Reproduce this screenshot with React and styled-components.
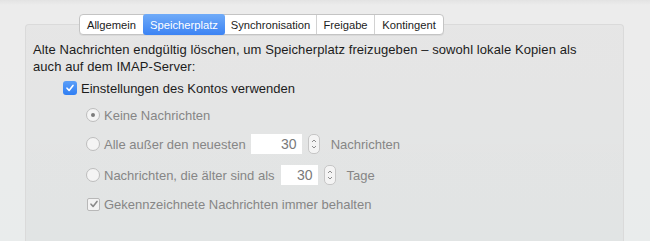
import React from "react";
import styled, { createGlobalStyle } from "styled-components";

const Global = createGlobalStyle`
  html, body { margin: 0; padding: 0; }
  body {
    width: 650px;
    height: 241px;
    overflow: hidden;
    font-family: "Liberation Sans", Arial, sans-serif;
    font-size: 13px;
    background: linear-gradient(#e3e3e3 0px, #ececec 5px, #ececec 60px, #e9ecec 241px);
  }
`;

const Window = styled.div`
  width: 650px;
  height: 241px;
  padding-top: 14px;
  box-sizing: border-box;
  display: flex;
  flex-direction: column;
`;

const TabBar = styled.div`
  display: flex;
  align-self: flex-start;
  margin-left: 79px;
  height: 19px;
  border: 1px solid #c4c4c4;
  border-radius: 4px;
  background: #ffffff;
  box-shadow: 0 1px 0 rgba(0, 0, 0, 0.05);
  position: relative;
  z-index: 1;
`;

const Tab = styled.div`
  display: flex;
  align-items: center;
  justify-content: center;
  width: ${(p) => p.$w}px;
  box-sizing: border-box;
  font-size: 11.2px;
  color: ${(p) => (p.$active ? "#ffffff" : "#1c1c1c")};
  background: ${(p) =>
    p.$active ? "linear-gradient(#70abf8, #3b83f4)" : "transparent"};
  border-left: ${(p) => (p.$first || p.$active || p.$afterActive ? "none" : "1px solid #d2d2d2")};
  margin: ${(p) => (p.$active ? "-1px 0" : "0")};
  height: ${(p) => (p.$active ? "21px" : "100%")};
  border-radius: ${(p) => (p.$active ? "3px" : "0")};
  white-space: nowrap;
`;

const Panel = styled.div`
  margin-top: -11px;
  margin-left: 25px;
  width: 599px;
  flex: 1;
  box-sizing: border-box;
  border: 1px solid #dadada;
  border-bottom: none;
  border-radius: 4px 4px 0 0;
  background: linear-gradient(rgba(0, 0, 0, 0.028), rgba(0, 0, 0, 0.035));
  padding: 16px 0 0 7px;
  display: flex;
  flex-direction: column;
`;

const Intro = styled.p`
  margin: 0;
  color: #1c1c1c;
  line-height: 17px;
  width: 556px;
  letter-spacing: 0.08px;
`;

const Row = styled.div`
  display: flex;
  align-items: center;
  height: 20px;
  margin-top: ${(p) => p.$gap}px;
  margin-left: ${(p) => p.$indent}px;
  color: ${(p) => (p.$disabled ? "#868686" : "#1c1c1c")};
  white-space: nowrap;
`;

const BlueCheck = styled.span`
  width: 14px;
  height: 14px;
  border-radius: 3px;
  background: linear-gradient(#5c9ff8, #2f7ef3);
  display: inline-flex;
  align-items: center;
  justify-content: center;
  margin-right: 4px;
  flex: none;
`;

const GrayCheck = styled.span`
  width: 11px;
  height: 11px;
  border-radius: 2px;
  border: 1px solid #b8b8b8;
  background: #f3f3f3;
  display: inline-flex;
  align-items: center;
  justify-content: center;
  margin-right: 4px;
  flex: none;
`;

const Radio = styled.span`
  width: 12px;
  height: 12px;
  border-radius: 50%;
  border: 1px solid #bdbdbd;
  background: #f4f4f4;
  display: inline-flex;
  align-items: center;
  justify-content: center;
  margin-right: 4px;
  flex: none;
  &::after {
    content: "";
    display: ${(p) => (p.$on ? "block" : "none")};
    width: 4px;
    height: 4px;
    border-radius: 50%;
    background: #7c7c7c;
  }
`;

const NumField = styled.span`
  width: ${(p) => p.$w}px;
  height: 20px;
  background: #ffffff;
  color: #7a7a7a;
  display: inline-flex;
  align-items: center;
  justify-content: flex-end;
  padding-right: 5px;
  box-sizing: border-box;
  margin-left: ${(p) => p.$ml}px;
  font-size: 14px;
`;

const Stepper = styled.span`
  width: 10px;
  height: 18px;
  border: 1px solid #c6c6c6;
  border-radius: 5px;
  background: #f4f4f4;
  margin-left: 6px;
  margin-right: 11px;
  display: inline-flex;
  align-items: center;
  justify-content: center;
  flex: none;
`;

const Options = styled.div`
  display: flex;
  flex-direction: column;
`;

const Check = ({ color }) => (
  <svg width="10" height="10" viewBox="0 0 10 10">
    <path d="M2 5.2 L4.1 7.4 L8 2.4" fill="none" stroke={color} strokeWidth="1.6" strokeLinecap="round" strokeLinejoin="round" />
  </svg>
);

const Arrows = () => (
  <svg width="6" height="14" viewBox="0 0 6 14">
    <path d="M1 5 L3 3 L5 5 M1 9 L3 11 L5 9" fill="none" stroke="#8c8c8c" strokeWidth="1" />
  </svg>
);

const tabs = [
  { label: "Allgemein", w: 63 },
  { label: "Speicherplatz", w: 82, active: true },
  { label: "Synchronisation", w: 91 },
  { label: "Freigabe", w: 58 },
  { label: "Kontingent", w: 69 },
];

export default function App() {
  return (
    <>
      <Global />
      <Window>
        <TabBar>
          {tabs.map((t, i) => (
            <Tab
              key={t.label}
              $w={t.w}
              $active={t.active}
              $first={i === 0}
              $afterActive={i > 0 && tabs[i - 1].active}
            >
              {t.label}
            </Tab>
          ))}
        </TabBar>
        <Panel>
          <Intro>
            Alte Nachrichten endgültig löschen, um Speicherplatz freizugeben – sowohl lokale Kopien als auch auf dem IMAP-Server:
          </Intro>
          <Options>
            <Row $gap={3} $indent={30}>
              <BlueCheck>
                <Check color="#ffffff" />
              </BlueCheck>
              Einstellungen des Kontos verwenden
            </Row>
            <Row $gap={7} $indent={53} $disabled>
              <Radio $on />
              Keine Nachrichten
            </Row>
            <Row $gap={9} $indent={53} $disabled>
              <Radio />
              Alle außer den neuesten
              <NumField $w={51} $ml={5}>30</NumField>
              <Stepper>
                <Arrows />
              </Stepper>
              Nachrichten
            </Row>
            <Row $gap={11} $indent={53} $disabled>
              <Radio />
              Nachrichten, die älter sind als
              <NumField $w={37} $ml={6}>30</NumField>
              <Stepper>
                <Arrows />
              </Stepper>
              Tage
            </Row>
            <Row $gap={9} $indent={54} $disabled>
              <GrayCheck>
                <Check color="#8a8a8a" />
              </GrayCheck>
              Gekennzeichnete Nachrichten immer behalten
            </Row>
          </Options>
        </Panel>
      </Window>
    </>
  );
}
